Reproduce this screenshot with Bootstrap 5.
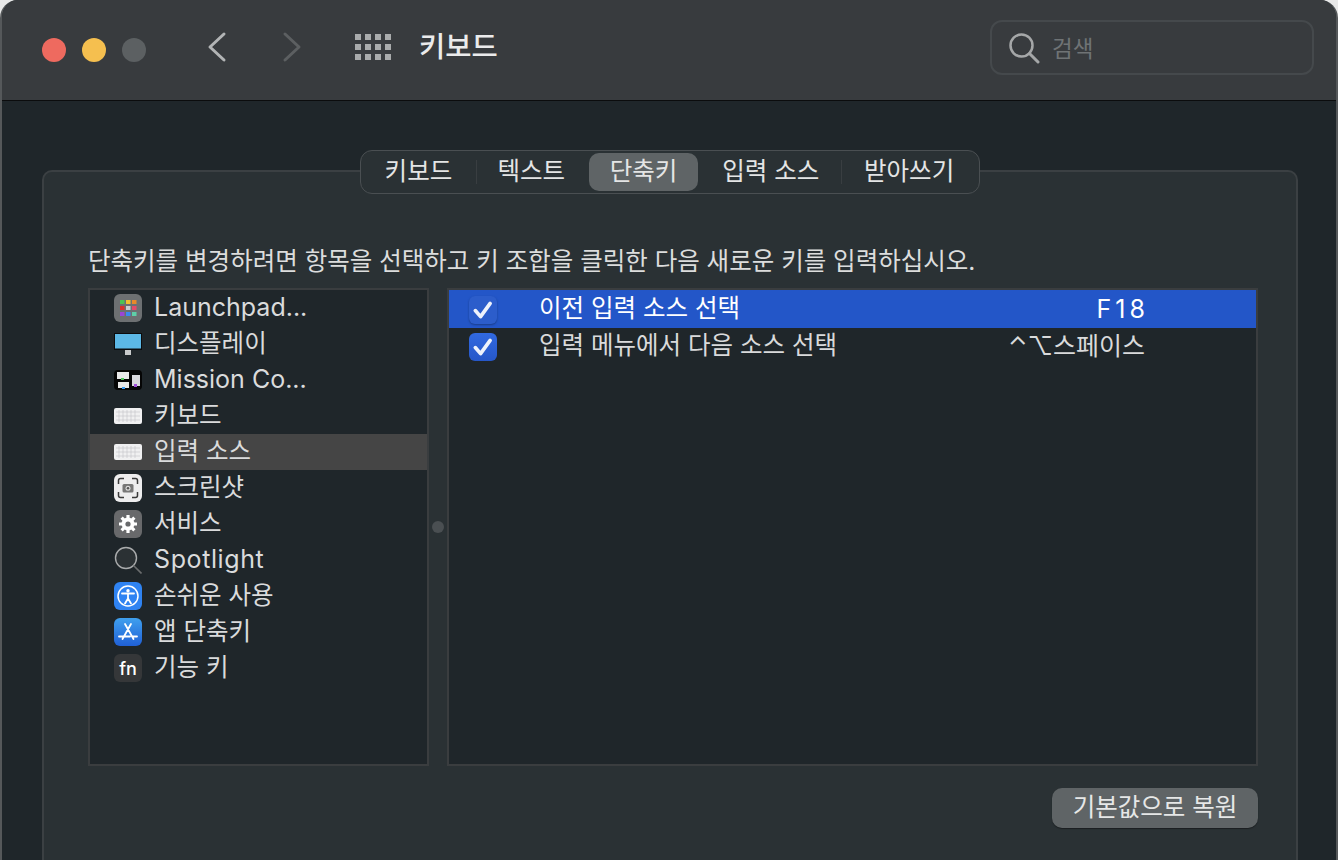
<!DOCTYPE html>
<html lang="ko">
<head>
<meta charset="utf-8">
<title>키보드</title>
<link href="https://cdn.jsdelivr.net/npm/bootstrap@5.3.0/dist/css/bootstrap.min.css" rel="stylesheet">
<style>
html,body{height:860px;overflow:hidden;background:#e8e8e8;}
body{font-family:Inter,"Noto Sans CJK KR",sans-serif;color:#dfe0e1;font-size:24.5px;line-height:1;}
.win{width:1338px;height:860px;background:#1f262a;border-radius:18px 18px 0 0;overflow:hidden;border-left:2px solid #55585a;border-right:2px solid #55585a;margin:0;}
.tbar{height:101px;background:#383b3e;border-bottom:1px solid #0b0c0d;padding:0 22px 0 40px;}
.lamp{width:24px;height:24px;border-radius:50%;}
.lamps{gap:16px;margin-right:61px;}
.nav-ico{display:block;margin-top:-6px;}
.nav-back{margin-right:55px;}
.nav-fwd{margin-right:53px;}
.wtitle{font-size:28.5px;font-weight:500;color:#ebebec;margin-left:28px;margin-top:-6px;}
.searchbox{width:324px;height:55px;border:2px solid #45494c;border-radius:12px;margin-top:-5px;padding-left:16px;gap:12px;color:#6f7375;font-size:22.5px;}
.searchbox span{margin-top:3px;}
.content{padding:50px 38px 0 40px;position:relative;}
.panel{height:720px;margin-top:19px;background:#2a3134;border:2px solid #3b4043;border-radius:10px;padding:0 38px 0 44px;position:relative;}
.tabs-wrap{position:absolute;left:358px;top:49px;z-index:2;width:620px;height:44px;background:#2a3134;border:1px solid #4a4f52;border-radius:12px;padding:2px 0 2px 0;}
.tabi{height:38px;font-size:24.5px;padding-bottom:2px;color:#e4e5e5;position:relative;}
.tabi.on{background:#5f6466;border-radius:10px;}
.tabi.t2{width:112px;padding-right:3px;}
.tabi.t1{width:115px;}
.tabi.t3{width:110px;}
.tabi.t4{width:143px;padding-left:2px;}
.tabi.t5{width:137px;padding-right:3px;}
.sep{width:1px;height:24px;background:#393e41;}
.hint{font-size:24.5px;color:#dcdddd;padding-top:77px;height:116px;white-space:nowrap;}
.lists{height:478px;gap:18px;}
.plist{width:341px;height:478px;background:#1f262a;border:2px solid #3a3d3f;}
.pdetail{width:811px;height:478px;background:#1f262a;border:2px solid #3a3d3f;position:relative;}
.grip{width:12px;height:12px;border-radius:50%;background:#4a4f52;position:absolute;left:-17px;top:231px;}
.prow{height:36px;padding-left:24px;gap:12px;font-size:24.5px;color:#dadbdc;white-space:nowrap;}
.prow span{margin-top:-2px;}
.prow .lat{font-size:25px;}
.prow .lat2{font-size:25px;letter-spacing:.6px;}
.prow.on{background:#454545;}
.prow svg{flex:none;width:28px;height:28px;}
.fn-txt{font:500 18px Inter,sans-serif;fill:#fff;}
.srow{height:38px;padding-left:20px;font-size:24.5px;color:#d9dadb;position:relative;}
.srow.two{height:36px;}
.srow.sel{background:#2356c8;color:#fff;}
.cbx{width:28px;height:28px;border-radius:6px;background:linear-gradient(#3169e0,#2657c8);flex:none;margin-top:2px;}
.srow.sel .cbx{background:#2c5dcb;box-shadow:0 1px 2px #1a3d8a;}
.stext{margin-left:42px;margin-top:-2px;}
.skey{position:absolute;right:107px;font-size:25px;letter-spacing:4px;}
.skey.b{right:111px;font-size:25px;letter-spacing:0;margin-top:0;}
.resetbtn{background:#5f6466;border:0;color:#e6e7e7;font-size:24.5px;line-height:1;width:206px;height:40px;border-radius:10px;padding:0 0 2px;box-shadow:0 1px 1px #1b1f21;}
.btnrow{padding-top:22px;}
</style>
</head>
<body>
<div class="win">
  <div class="tbar d-flex align-items-center">
    <div class="d-flex lamps">
      <div class="lamp" style="background:#ee6a5f"></div>
      <div class="lamp" style="background:#f5bf4f"></div>
      <div class="lamp" style="background:#5c6062"></div>
    </div>
    <svg class="nav-ico nav-back" width="20" height="32" viewBox="0 0 20 32"><path d="M17 3 3 16l14 13" fill="none" stroke="#b2b4b5" stroke-width="3" stroke-linecap="round" stroke-linejoin="round"/></svg>
    <svg class="nav-ico nav-fwd" width="20" height="32" viewBox="0 0 20 32"><path d="M3 3l14 13L3 29" fill="none" stroke="#5c5f61" stroke-width="3" stroke-linecap="round" stroke-linejoin="round"/></svg>
    <svg class="nav-ico" width="36" height="26" viewBox="0 0 36 26" fill="#a9abac"><rect x="0" y="0" width="6" height="6"/><rect x="10" y="0" width="6" height="6"/><rect x="20" y="0" width="6" height="6"/><rect x="30" y="0" width="6" height="6"/><rect x="0" y="10" width="6" height="6"/><rect x="10" y="10" width="6" height="6"/><rect x="20" y="10" width="6" height="6"/><rect x="30" y="10" width="6" height="6"/><rect x="0" y="20" width="6" height="6"/><rect x="10" y="20" width="6" height="6"/><rect x="20" y="20" width="6" height="6"/><rect x="30" y="20" width="6" height="6"/></svg>
    <div class="wtitle">키보드</div>
    <div class="searchbox d-flex align-items-center ms-auto">
      <svg width="32" height="32" viewBox="0 0 32 32"><circle cx="13.500" cy="13.500" r="11" fill="none" stroke="#a5a7a8" stroke-width="2.500"/><path d="M21.500 21.500 30 30" stroke="#a5a7a8" stroke-width="3" stroke-linecap="round"/></svg>
      <span>검색</span>
    </div>
  </div>
  <div class="content">
    <div class="tabs-wrap d-flex align-items-center">
      <div class="tabi t1 d-flex align-items-center justify-content-center">키보드</div>
      <div class="sep"></div>
      <div class="tabi t2 d-flex align-items-center justify-content-center">텍스트</div>
      <div class="tabi t3 on d-flex align-items-center justify-content-center">단축키</div>
      <div class="tabi t4 d-flex align-items-center justify-content-center">입력 소스</div>
      <div class="sep"></div>
      <div class="tabi t5 d-flex align-items-center justify-content-center">받아쓰기</div>
    </div>
    <div class="panel">
      <div class="hint">단축키를 변경하려면 항목을 선택하고 키 조합을 클릭한 다음 새로운 키를 입력하십시오.</div>
      <div class="lists d-flex">
        <div class="plist">
          <div class="prow d-flex align-items-center">
            <svg viewBox="0 0 28 28"><rect width="28" height="28" rx="6" fill="#6d7072"/><g><rect x="6" y="6" width="4.500" height="4" fill="#4cc453"/><rect x="12" y="6" width="4.500" height="4" fill="#f0c030"/><rect x="18" y="6" width="4.500" height="4" fill="#e88a2a"/><rect x="6" y="12" width="4.500" height="4" fill="#d8332c"/><rect x="12" y="12" width="4.500" height="4" fill="#c9cdd0"/><rect x="18" y="12" width="4.500" height="4" fill="#e54a6a"/><rect x="6" y="18" width="4.500" height="4" fill="#9a45d8"/><rect x="12" y="18" width="4.500" height="4" fill="#3a8af0"/><rect x="18" y="18" width="4.500" height="4" fill="#5ed0a8"/></g></svg>
            <span class="lat">Launchpad...</span>
          </div>
          <div class="prow d-flex align-items-center">
            <svg viewBox="0 0 28 28"><rect y="3" width="28" height="17" fill="#0c0c0d"/><rect x="1" y="4" width="26" height="14.500" fill="#5cb8e6"/><rect x="11" y="20" width="6" height="5" fill="#c9cbcc"/></svg>
            <span>디스플레이</span>
          </div>
          <div class="prow d-flex align-items-center">
            <svg viewBox="0 0 28 28"><rect y="4" width="28" height="20" rx="4" fill="#050505"/><rect x="3" y="6" width="12" height="7" fill="#e8e8e8"/><rect x="7" y="12" width="3" height="2" fill="#52c45a"/><rect x="4" y="16" width="11" height="6" fill="#e8e8e8"/><rect x="8" y="21" width="3" height="2" fill="#3a9af0"/><rect x="18" y="9" width="8" height="11" fill="#d8d8dc"/><rect x="20" y="18" width="3" height="3" fill="#a050d8"/></svg>
            <span class="lat">Mission Co...</span>
          </div>
          <div class="prow d-flex align-items-center">
            <svg viewBox="0 0 28 28"><rect y="6" width="28" height="16" rx="2" fill="#f0f0f1"/><path d="M2 10h24M2 14h24M2 18h24M5 8v12M9 8v12M13 8v12M17 8v12M21 8v12" stroke="#c4c5c6" stroke-width=".6"/></svg>
            <span>키보드</span>
          </div>
          <div class="prow on d-flex align-items-center">
            <svg viewBox="0 0 28 28"><rect y="6" width="28" height="16" rx="2" fill="#f0f0f1"/><path d="M2 10h24M2 14h24M2 18h24M5 8v12M9 8v12M13 8v12M17 8v12M21 8v12" stroke="#c4c5c6" stroke-width=".6"/></svg>
            <span>입력 소스</span>
          </div>
          <div class="prow d-flex align-items-center">
            <svg viewBox="0 0 28 28"><rect width="28" height="28" rx="6" fill="#ededee"/><path d="M4.500 10V6.500a2 2 0 0 1 2-2H10M18 4.500h3.500a2 2 0 0 1 2 2V10M23.500 18v3.500a2 2 0 0 1-2 2H18M10 23.500H6.500a2 2 0 0 1-2-2V18" fill="none" stroke="#3a3a3a" stroke-width="1.500"/><rect x="8.500" y="10" width="11" height="8.500" rx="1.500" fill="#777"/><circle cx="14" cy="14.200" r="2.500" fill="#ddd"/><circle cx="14" cy="14.200" r="1.300" fill="#555"/></svg>
            <span>스크린샷</span>
          </div>
          <div class="prow d-flex align-items-center">
            <svg viewBox="0 0 28 28"><rect width="28" height="28" rx="6" fill="#68696b"/><circle cx="14" cy="14" r="6.500" fill="#fff"/><path d="M14 5v18M5 14h18M7.600 7.600l12.800 12.800M20.400 7.600 7.600 20.400" stroke="#fff" stroke-width="3.200"/><circle cx="14" cy="14" r="2.600" fill="#68696b"/></svg>
            <span>서비스</span>
          </div>
          <div class="prow d-flex align-items-center">
            <svg viewBox="0 0 28 28"><circle cx="12" cy="12" r="10.500" fill="#2b3134" stroke="#a9abac" stroke-width="1.400"/><path d="M19.500 19.500 27.500 27.500" stroke="#6b6d6e" stroke-width="1.600"/></svg>
            <span class="lat2">Spotlight</span>
          </div>
          <div class="prow d-flex align-items-center">
            <svg viewBox="0 0 28 28"><rect width="28" height="28" rx="6" fill="#2f83f2"/><circle cx="14" cy="14" r="10" fill="none" stroke="#fff" stroke-width="1.500"/><circle cx="14" cy="8.800" r="1.700" fill="#fff"/><path d="M8 11.500h12M14 11.500v5M14 16.500l-3 5M14 16.500l3 5" stroke="#fff" stroke-width="1.800" stroke-linecap="round"/></svg>
            <span>손쉬운 사용</span>
          </div>
          <div class="prow d-flex align-items-center">
            <svg viewBox="0 0 28 28"><defs><linearGradient id="ag" x1="0" y1="0" x2="0" y2="1"><stop offset="0" stop-color="#3fa0ee"/><stop offset="1" stop-color="#2060d6"/></linearGradient></defs><rect width="28" height="28" rx="6" fill="url(#ag)"/><path d="M11 6l8.500 15M17 6 8.500 21M5 18.500h11M18 18.500h5" stroke="#fff" stroke-width="1.800" stroke-linecap="round"/></svg>
            <span>앱 단축키</span>
          </div>
          <div class="prow d-flex align-items-center">
            <svg viewBox="0 0 28 28"><rect width="28" height="28" rx="6" fill="#353739"/><text class="fn-txt" x="14" y="20.500" text-anchor="middle">fn</text></svg>
            <span>기능 키</span>
          </div>
        </div>
        <div class="pdetail">
          <div class="grip"></div>
          <div class="srow sel d-flex align-items-center">
            <div class="cbx d-flex align-items-center justify-content-center"><svg width="22" height="20" viewBox="0 0 20 18"><path d="M3 9.500 7.800 15 16.500 3" fill="none" stroke="#eef2fb" stroke-width="3.300" stroke-linecap="round" stroke-linejoin="round"/></svg></div>
            <span class="stext">이전 입력 소스 선택</span>
            <span class="skey">F18</span>
          </div>
          <div class="srow two d-flex align-items-center">
            <div class="cbx d-flex align-items-center justify-content-center"><svg width="22" height="20" viewBox="0 0 20 18"><path d="M3 9.500 7.800 15 16.500 3" fill="none" stroke="#eef2fb" stroke-width="3.300" stroke-linecap="round" stroke-linejoin="round"/></svg></div>
            <span class="stext">입력 메뉴에서 다음 소스 선택</span>
            <span class="skey b">⌃⌥스페이스</span>
          </div>
        </div>
      </div>
      <div class="btnrow d-flex justify-content-end">
        <button class="resetbtn" type="button">기본값으로 복원</button>
      </div>
    </div>
  </div>
</div>
</body>
</html>
